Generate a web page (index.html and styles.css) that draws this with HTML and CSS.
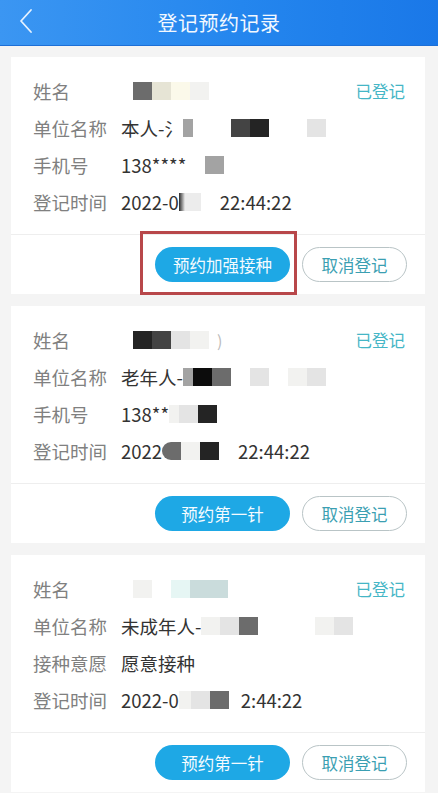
FILE: index.html
```html
<!DOCTYPE html>
<html lang="zh-CN">
<head>
<meta charset="utf-8">
<title>登记预约记录</title>
<link rel="stylesheet" href="styles.css">
</head>
<body>
<header class="topbar">
  <svg class="back" width="16" height="26" viewBox="0 0 16 26"><path d="M13 2 L3 13 L13 24" fill="none" stroke="#e6f2ff" stroke-width="1.8" stroke-linecap="round" stroke-linejoin="round"/></svg>
  <h1 class="title">登记预约记录</h1>
</header>
<main class="list">
  <section class="card">
    <div class="info">
      <div class="row">
        <span class="label">姓名</span>
        <span class="value"><span class="t w12"></span><span class="t k2"></span><span class="t k6"></span><span class="t k7"></span><span class="t k5"></span></span>
        <span class="status">已登记</span>
      </div>
      <div class="row">
        <span class="label">单位名称</span>
        <span class="value">本人-氵<span class="t w10 k3"></span><span class="t w38"></span><span class="t k1b"></span><span class="t k1"></span><span class="t w38"></span><span class="t k4"></span></span>
      </div>
      <div class="row">
        <span class="label">手机号</span>
        <span class="value">138****<span class="t w19"></span><span class="t k3"></span></span>
      </div>
      <div class="row">
        <span class="label">登记时间</span>
        <span class="value">2022-0<span class="t w22 fade"></span><span class="t w19"></span>22:44:22</span>
      </div>
    </div>
    <div class="actions">
      <button class="btn primary">预约加强接种</button>
      <button class="btn ghost">取消登记</button>
    </div>
    <div class="mark"></div>
  </section>

  <section class="card">
    <div class="info">
      <div class="row">
        <span class="label">姓名</span>
        <span class="value"><span class="t w12"></span><span class="t k1"></span><span class="t k1b"></span><span class="t k4"></span><span class="t k5"></span><span class="paren">)</span></span>
        <span class="status">已登记</span>
      </div>
      <div class="row">
        <span class="label">单位名称</span>
        <span class="value">老年人-<span class="t w10 k3"></span><span class="t k0"></span><span class="t k2"></span><span class="t w19"></span><span class="t k4"></span><span class="t w19"></span><span class="t k5"></span><span class="t k4"></span></span>
      </div>
      <div class="row">
        <span class="label">手机号</span>
        <span class="value">138**<span class="t w10 k5"></span><span class="t k4"></span><span class="t k1"></span></span>
      </div>
      <div class="row">
        <span class="label">登记时间</span>
        <span class="value">2022<span class="t k2 blob"></span><span class="t k5"></span><span class="t k1"></span><span class="t w19"></span>22:44:22</span>
      </div>
    </div>
    <div class="actions">
      <button class="btn primary">预约第一针</button>
      <button class="btn ghost">取消登记</button>
    </div>
  </section>

  <section class="card">
    <div class="info">
      <div class="row">
        <span class="label">姓名</span>
        <span class="value"><span class="t w12"></span><span class="t w19 k5"></span><span class="t w19"></span><span class="t k8"></span><span class="t w38 k9"></span></span>
        <span class="status">已登记</span>
      </div>
      <div class="row">
        <span class="label">单位名称</span>
        <span class="value">未成年人-<span class="t k5"></span><span class="t k4"></span><span class="t k2"></span><span class="t w38"></span><span class="t w19"></span><span class="t k5"></span><span class="t k4"></span></span>
      </div>
      <div class="row">
        <span class="label">接种意愿</span>
        <span class="value">愿意接种</span>
      </div>
      <div class="row">
        <span class="label">登记时间</span>
        <span class="value">2022-0<span class="t w12 k5"></span><span class="t k4"></span><span class="t k2"></span><span class="t w12"></span>2:44:22</span>
      </div>
    </div>
    <div class="actions">
      <button class="btn primary">预约第一针</button>
      <button class="btn ghost">取消登记</button>
    </div>
  </section>
</main>
</body>
</html>
```
FILE: styles.css
```css
* { box-sizing: border-box; }
html, body {
  margin: 0;
  padding: 0;
  background: #f4f4f4;
  font-family: "Noto Sans CJK SC", "Noto Sans", sans-serif;
}
body { width: 438px; height: 793px; overflow: hidden; }

.topbar {
  height: 46px;
  display: flex;
  align-items: center;
  justify-content: center;
  position: relative;
  background: linear-gradient(90deg, #3b96f2 0%, #2486ee 55%, #1a78e8 100%);
  border-bottom: 1px solid #1d6fd6;
}
.back { position: absolute; left: 18px; top: 8px; }
.title {
  margin: 0;
  font-size: 20px;
  font-weight: 400;
  color: #f2f8ff;
  letter-spacing: 0.5px;
}

.list {
  display: flex;
  flex-direction: column;
  gap: 12px;
  padding: 11px 13px 0 11px;
}

.card {
  position: relative;
  background: #fff;
}
.info {
  padding: 15px 20px 14px 22px;
}
.row {
  height: 37px;
  display: flex;
  align-items: center;
  font-size: 18.5px;
}
.label {
  width: 88px;
  flex: none;
  color: #808080;
}
.value {
  display: flex;
  align-items: center;
  color: #333;
  white-space: nowrap;
}
.status {
  margin-left: auto;
  font-size: 16.5px;
  color: #45b6c6;
}

.t { display: inline-block; width: 19px; height: 18px; flex: none; }
.w10 { width: 10px; }
.w12 { width: 12px; }
.w19 { width: 19px; }
.w22 { width: 22px; }
.w38 { width: 38px; }
.k0 { background: #0c0c0c; }
.k1 { background: #242424; }
.k1b { background: #444; }
.k2 { background: #6c6c6c; }
.k3 { background: #a3a3a3; }
.k4 { background: #e4e4e4; }
.k5 { background: #f2f2f0; }
.k6 { background: #e6e4d5; }
.k7 { background: #fbf9ea; }
.k8 { background: #e6f6f4; }
.k9 { background: #cadcdc; }
.fade { background: linear-gradient(90deg, #2a2a2a 0, #8a8a8a 3px, #ececec 6px, #ececec 100%); }
.blob { border-radius: 10px 0 0 10px; }
.paren { color: #bbb; font-size: 16px; margin-left: 8px; }

.actions {
  border-top: 1px solid #eeeeee;
  display: flex;
  justify-content: flex-end;
  align-items: center;
  gap: 12px;
  padding: 12px 18px 12px 0;
}
.btn {
  height: 35px;
  border-radius: 18px;
  font-family: inherit;
  font-size: 16.5px;
  padding: 0;
  cursor: pointer;
}
.primary {
  width: 135px;
  background: #1ea8e5;
  border: none;
  color: #f4fbff;
}
.ghost {
  width: 105px;
  background: #fff;
  border: 1px solid #b9c4c6;
  color: #3b9fb2;
}

.mark {
  position: absolute;
  left: 129px;
  top: 174px;
  width: 157px;
  height: 64px;
  border: 3px solid #b8474a;
  pointer-events: none;
}
```
